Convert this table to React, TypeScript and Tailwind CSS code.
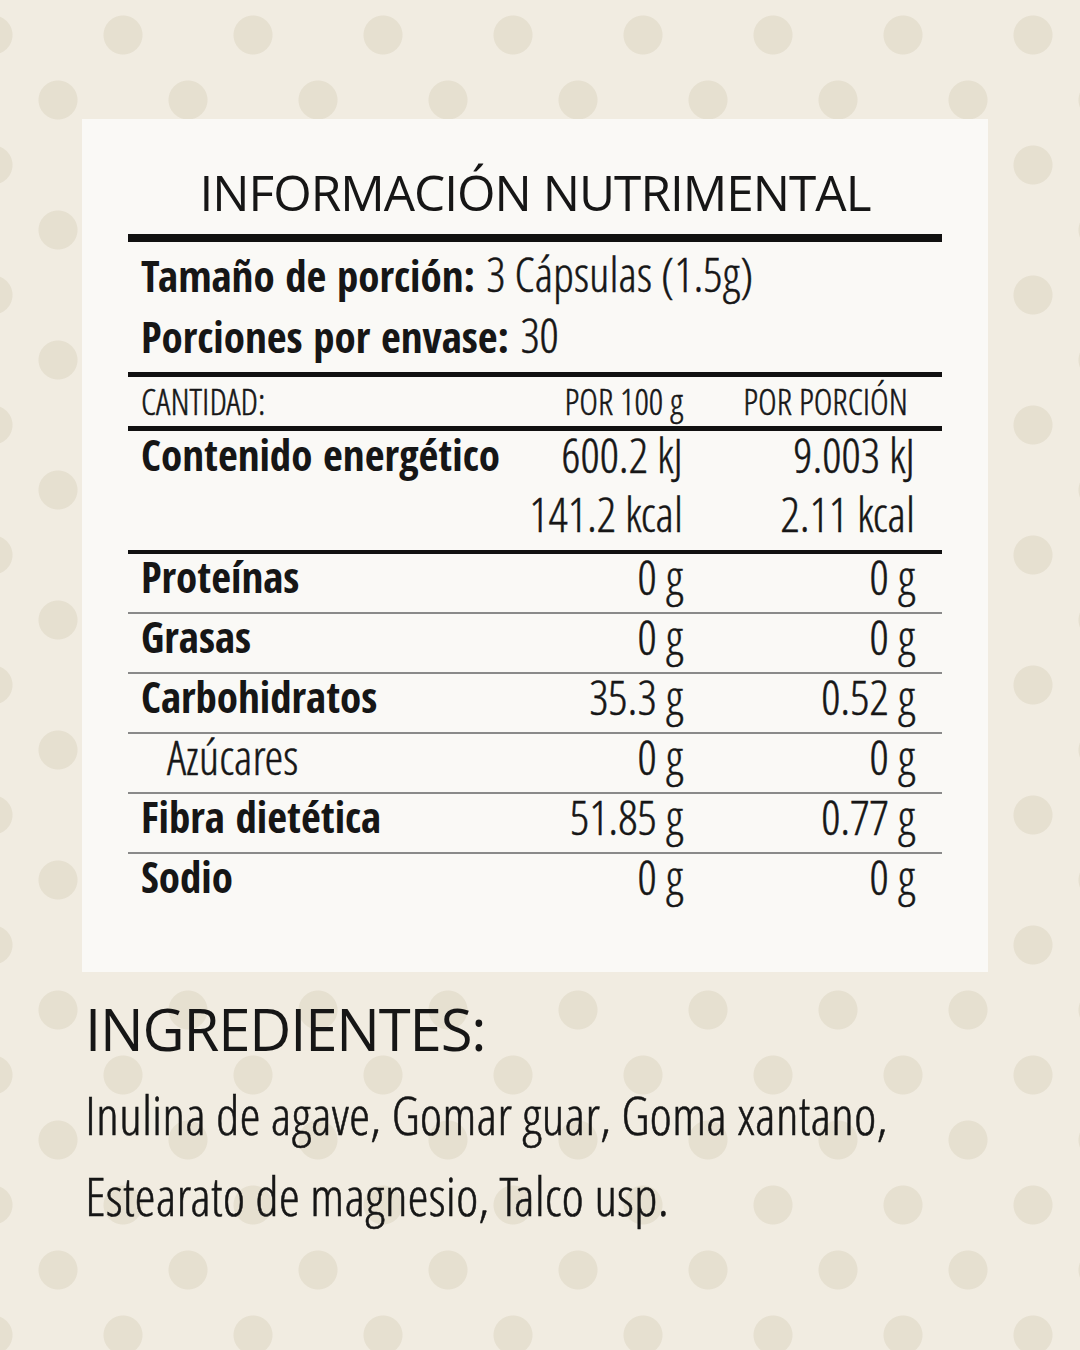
import React from 'react';

const bold = "font-['Open_Sans_Condensed','Liberation_Sans_Narrow','DejaVu_Sans_Condensed',sans-serif] font-bold font-stretch-condensed";
const light = "font-['Open_Sans_Condensed_Light','Liberation_Sans_Narrow','DejaVu_Sans_Condensed',sans-serif] font-light font-stretch-condensed [-webkit-text-stroke:0.5px_#161616]";

const rows = [
  { label: 'Proteínas', a: '0 g', b: '0 g' },
  { label: 'Grasas', a: '0 g', b: '0 g' },
  { label: 'Carbohidratos', a: '35.3 g', b: '0.52 g' },
  { label: 'Azúcares', a: '0 g', b: '0 g', sub: true },
  { label: 'Fibra dietética', a: '51.85 g', b: '0.77 g' },
  { label: 'Sodio', a: '0 g', b: '0 g' },
];

export default function App() {
  return (
    <div className="w-[1080px] h-[1350px] bg-[#f1ece1] bg-[image:radial-gradient(circle,#e6e0d0_19px,transparent_20px),radial-gradient(circle,#e6e0d0_19px,transparent_20px)] bg-[length:130px_130px] bg-[position:58px_-30px,-7px_35px] pt-[119px] text-[#161616]">
      {/* tabla nutrimental */}
      <div className="ml-[82px] w-[906px] h-[853px] bg-[#faf9f6] flex flex-col items-center">
        <h1 className="mt-[43px] h-[72px] text-[49.5px] leading-[60px] font-['Open_Sans',sans-serif] tracking-[-0.02em] whitespace-nowrap">
          INFORMACIÓN NUTRIMENTAL
        </h1>
        <div className="w-[814px] whitespace-nowrap">
          <div className="h-[8px] bg-[#111]" />
          <div className="pl-[13px] pt-[2px] h-[130px] text-[43px] leading-[59px]">
            <div>
              <span className={bold}>Tamaño de porción:</span>{' '}
              <span className={`${light} text-[48px]`}>3 Cápsulas (1.5g)</span>
            </div>
            <div>
              <span className={bold}>Porciones por envase:</span>{' '}
              <span className={`${light} text-[48px]`}>30</span>
            </div>
          </div>
          <div className="h-[5px] bg-[#111]" />
          <div className={`grid grid-cols-[387px_155px_232px] pl-[13px] h-[49px] text-[36px] leading-[49px] ${light}`}>
            <span>CANTIDAD:</span>
            <span className="text-right">POR 100 g</span>
            <span className="text-right pr-[7px]">POR PORCIÓN</span>
          </div>
          <div className="h-[5px] bg-[#111]" />
          <div className="grid grid-cols-[387px_155px_232px] auto-rows-[59px] pl-[13px] h-[119px] leading-[48px]">
            <span className={`${bold} text-[43px]`}>Contenido energético</span>
            <span className={`${light} text-[48px] text-right`}>600.2 kJ</span>
            <span className={`${light} text-[48px] text-right`}>9.003 kJ</span>
            <span />
            <span className={`${light} text-[48px] text-right`}>141.2 kcal</span>
            <span className={`${light} text-[48px] text-right`}>2.11 kcal</span>
          </div>
          <div className="h-[4px] bg-[#111]" />
          {rows.map((r, i) => (
            <React.Fragment key={r.label}>
              {i > 0 && <div className="h-[2px] bg-[#8a8a8a]" />}
              <div className="grid grid-cols-[387px_155px_232px] pl-[13px] h-[58px] leading-[46px]">
                <span className={r.sub ? `${light} text-[48px] pl-[26px]` : `${bold} text-[43px]`}>{r.label}</span>
                <span className={`${light} text-[48px] text-right`}>{r.a}</span>
                <span className={`${light} text-[48px] text-right`}>{r.b}</span>
              </div>
            </React.Fragment>
          ))}
        </div>
      </div>

      {/* ingredientes */}
      <div className="ml-[85px] mt-[22px]">
        <h2 className="text-[58px] leading-[70px] font-['Open_Sans',sans-serif] tracking-[-0.02em]">INGREDIENTES:</h2>
        <p className={`mt-[10px] text-[54px] leading-[81px] whitespace-nowrap ${light}`}>
          Inulina de agave, Gomar guar, Goma xantano,
          <br />
          Estearato de magnesio, Talco usp.
        </p>
      </div>
    </div>
  );
}
